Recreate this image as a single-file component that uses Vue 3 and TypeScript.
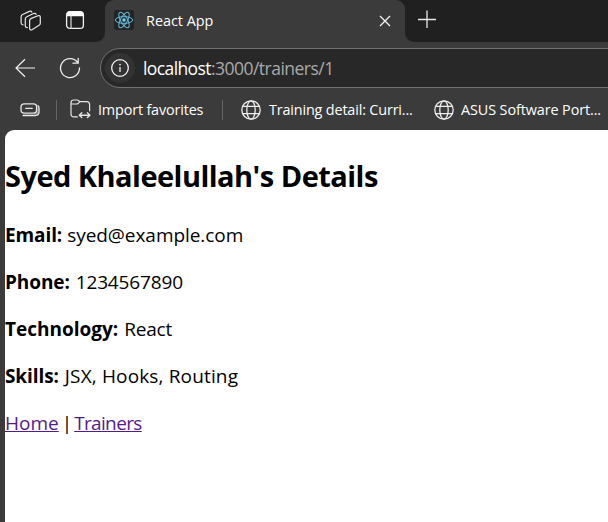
<script setup lang="ts">
interface Field {
  key: string
  label: string
  value: string
}

const fields: Field[] = [
  { key: 'email', label: 'Email:', value: 'syed@example.com' },
  { key: 'phone', label: 'Phone:', value: '1234567890' },
  { key: 'technology', label: 'Technology:', value: 'React' },
  { key: 'skills', label: 'Skills:', value: 'JSX, Hooks, Routing' },
]

const bookmarks: { key: string; title: string }[] = [
  { key: 'training', title: 'Training detail: Curri...' },
  { key: 'asus', title: 'ASUS Software Port...' },
]
</script>

<template>
  <div class="browser">
    <header class="tabstrip">
      <div class="strip-left">
        <svg class="workspaces" width="22" height="22" viewBox="0 0 22 22">
          <g fill="none" stroke="#e6e6e6" stroke-width="1.2" stroke-linejoin="round" stroke-linecap="round">
            <path d="M11.3 8.4 18 5.7Q20.3 5 20.3 7.4V13.2Q20.3 14.6 19.1 15.3L12 19.7Q9.6 20.6 9.6 18.2V11Q9.6 9.2 11.3 8.4Z" />
            <path d="M7.4 17.6Q5.3 17.6 5.3 15.7V9Q5.3 7.4 6.8 6.7L13.6 3.5Q15.6 2.9 16.1 4.4" />
            <path d="M3 14.8Q1.1 14.6 1.1 12.8V6.7Q1.1 5.2 2.6 4.5L9.3 1.4Q11.1 .8 11.8 2.1" />
          </g>
        </svg>
        <svg class="tabmenu" width="20" height="20" viewBox="0 0 20 20">
          <rect x="1.6" y="1.6" width="16.8" height="16.8" rx="3.2" fill="none" stroke="#f2f2f2" stroke-width="1.3" />
          <path d="M1.6 6.2V4.6a3 3 0 0 1 3-3h10.8a3 3 0 0 1 3 3v1.6z" fill="#fff" />
          <path d="M6 6v12.2" stroke="#ddd" stroke-width="1.2" />
        </svg>
      </div>
      <div class="tab">
        <svg class="favicon" width="20" height="20" viewBox="0 0 20 20">
          <rect width="20" height="20" rx="2" fill="#242424" />
          <g fill="none" stroke="#61b9d8" stroke-width="1">
            <ellipse cx="10" cy="10" rx="8.7" ry="3.4" />
            <ellipse cx="10" cy="10" rx="8.7" ry="3.4" transform="rotate(60 10 10)" />
            <ellipse cx="10" cy="10" rx="8.7" ry="3.4" transform="rotate(120 10 10)" />
          </g>
          <circle cx="10" cy="10" r="1.7" fill="#70d4f4" />
        </svg>
        <span class="tab-title">React App</span>
        <svg class="close" width="12" height="12" viewBox="0 0 12 12">
          <path d="M1 1l10 10M11 1L1 11" stroke="#f4f4f4" stroke-width="1.3" />
        </svg>
      </div>
      <div class="strip-right">
        <svg width="18" height="18" viewBox="0 0 18 18">
          <path d="M0 9.5h18M9 .5v17.5" stroke="#e8e8e8" stroke-width="1.3" />
        </svg>
      </div>
    </header>

    <div class="toolbar">
      <svg class="back" width="20" height="20" viewBox="0 0 20 20">
        <path d="M20 10H1M10 1.2L1 10l9 8.8" fill="none" stroke="#f2f2f2" stroke-width="1.2" />
      </svg>
      <svg class="reload" width="22" height="22" viewBox="0 0 22 22">
        <path d="M18.9 5.8A9.5 9.5 0 1 0 20.5 11M19.2 1.4V6.2H14" fill="none" stroke="#ededed" stroke-width="1.3" stroke-linecap="round" stroke-linejoin="round" />
      </svg>
      <div class="omnibox">
        <div class="site-info">
          <svg width="18" height="18" viewBox="0 0 18 18">
            <circle cx="9" cy="9" r="8.3" fill="none" stroke="#f4f4f4" stroke-width="1.3" />
            <path d="M9 8v5" stroke="#eee" stroke-width="1.3" />
            <circle cx="9" cy="5.6" r=".9" fill="#eee" />
          </svg>
        </div>
        <span class="host">localhost</span><span class="path">:3000/trainers/1</span>
      </div>
    </div>

    <nav class="favorites">
      <svg class="stack" width="20" height="14" viewBox="0 0 20 14">
        <g fill="none" stroke="#e8e8e8" stroke-width="1.3" stroke-linecap="round">
          <rect x="1" y=".8" width="15.6" height="9.4" rx="3" />
          <path d="M5.8 5.4h6.4" />
          <path d="M3 12.6h12.2Q19 12.4 19 8.6V5.2Q19 3.6 18 2.8" stroke-width="1.4" />
          <path d="M3.4 11.2H15Q17.8 11 17.8 8.4V5" stroke="#aaa" stroke-width=".8" />
        </g>
      </svg>
      <i class="divider first"></i>
      <svg class="folder" width="22" height="20" viewBox="0 0 22 20">
        <g fill="none" stroke="#e5e5e5" stroke-width="1.2" stroke-linecap="round" stroke-linejoin="round">
          <path d="M7.4 17.9H4Q1 17.9 1 14.9V3.7Q1 1 3.7 1H7Q8 1 8.6 1.7L9.8 2.6H16.6Q19.6 2.6 19.6 5.6V11.8" />
          <path d="M1 5H6.7Q7.6 5 8.2 4.3L9.8 2.6" />
          <path d="M9.8 16.2h9.6M11.8 13.8l-2.5 2.4 2.5 2.4M17.4 13.8l2.5 2.4-2.5 2.4" stroke-width="1.4" />
        </g>
      </svg>
      <span class="fav-text import">Import favorites</span>
      <i class="divider second"></i>
      <div v-for="mark in bookmarks" :key="mark.key" class="bookmark" :class="mark.key">
        <svg width="20" height="20" viewBox="0 0 20 20">
          <g fill="none" stroke="#eee" stroke-width="1.3">
            <circle cx="10" cy="10" r="9.2" />
            <ellipse cx="10" cy="10" rx="4.2" ry="9.2" />
            <path d="M1.6 6.4h16.8M1.6 13.6h16.8" />
          </g>
        </svg>
        <span class="fav-text">{{ mark.title }}</span>
      </div>
    </nav>

    <main class="page">
      <h2>Syed Khaleelullah's Details</h2>
      <p v-for="field in fields" :key="field.key" :class="field.key">
        <strong>{{ field.label }}</strong><span class="value">{{ field.value }}</span>
      </p>
      <p class="links"><a class="home">Home</a><span class="bar">|</span><a class="trainers">Trainers</a></p>
    </main>
  </div>
</template>

<style>
body {
  margin: 0;
  overflow: hidden;
}
</style>

<style scoped>
.browser {
  width: 608px;
  height: 522px;
  overflow: hidden;
  display: flex;
  flex-direction: column;
  background: #3b3b3b;
  color: #fff;
  font-family: "Segoe UI", "Open Sans", "Noto Sans", sans-serif;
  white-space: nowrap;
}
svg {
  display: block;
  flex: none;
}
.tabstrip {
  height: 42px;
  display: flex;
  flex: none;
  background: linear-gradient(#202020, #202020) top / 100% 20px no-repeat #3b3b3b;
}
.strip-left {
  width: 105px;
  box-sizing: border-box;
  flex: none;
  display: flex;
  padding: 10px 0 0 20px;
  background: #202020;
  border-bottom-right-radius: 9px;
}
.tabmenu {
  margin-left: 23px;
}
.tab {
  width: 300px;
  box-sizing: border-box;
  flex: none;
  display: flex;
  align-items: center;
  padding: 0 14px 2px 9px;
  background: #3b3b3b;
  border-radius: 9px 9px 0 0;
}
.tab-title {
  margin-left: 12px;
  font-size: 14.4px;
  letter-spacing: 0;
}
.close {
  margin: 1px 0 0 auto;
}
.strip-right {
  flex: 1;
  padding: 10px 0 0 13px;
  background: #202020;
  border-bottom-left-radius: 9px;
}
.toolbar {
  height: 46px;
  flex: none;
  display: flex;
  align-items: center;
}
.back {
  margin: 5px 0 0 15px;
}
.reload {
  margin: 5px 0 0 24px;
}
.omnibox {
  box-sizing: border-box;
  height: 40px;
  width: 540px;
  flex: none;
  display: flex;
  align-items: center;
  align-self: flex-end;
  margin-left: 19px;
  padding-left: 4px;
  border: 1px solid #727272;
  border-radius: 20px;
  background: #282828;
  font-size: 17.5px;
}
.site-info {
  width: 30px;
  height: 30px;
  display: flex;
  align-items: center;
  justify-content: center;
  border-radius: 50%;
  background: #333;
}
.host {
  margin-left: 8px;
  letter-spacing: -0.6px;
}
.path {
  color: #aaa;
  letter-spacing: -0.52px;
}
.favorites {
  height: 42px;
  flex: none;
  display: flex;
  align-items: center;
  font-size: 14.4px;
}
.stack {
  margin: 1px 0 0 20px;
}
.divider {
  width: 1px;
  height: 20px;
  flex: none;
  background: #656565;
}
.divider.first {
  margin: 2px 0 0 16px;
}
.folder {
  margin-left: 13px;
}
.fav-text {
  letter-spacing: -0.16px;
}
.asus .fav-text {
  letter-spacing: -0.1px;
}
.import {
  margin-left: 6px;
  width: 105px;
}
.divider.second {
  margin: 2px 0 0 19px;
}
.bookmark {
  display: flex;
  align-items: center;
  width: 172px;
  flex: none;
  gap: 8px;
  margin: 1px 0 0 18px;
}
.bookmark.asus {
  margin-left: 21px;
  gap: 7px;
}
.page {
  flex: 1;
  margin-left: 5px;
  border-top-left-radius: 9px;
  background: #fff;
  color: #000;
  font-size: 19px;
  line-height: 27px;
}
h2 {
  margin: 26px 0 26px;
  font-size: 29px;
  line-height: 40px;
  letter-spacing: -0.53px;
}
p {
  margin: 0 0 20px;
}
strong {
  letter-spacing: -0.1px;
}
.technology strong {
  letter-spacing: 0;
}
.value {
  margin-left: 5px;
  letter-spacing: -0.05px;
}
.phone .value {
  margin-left: 6px;
  letter-spacing: -0.15px;
}
.technology .value {
  margin-left: 6px;
  letter-spacing: -0.2px;
}
.skills .value {
  margin-left: 6px;
  letter-spacing: 0.15px;
}
a {
  color: #551a8b;
  text-decoration: underline;
}
.home {
  letter-spacing: 0;
}
.trainers {
  letter-spacing: -0.65px;
}
.bar {
  margin: 0 2px 0 3px;
}
</style>
